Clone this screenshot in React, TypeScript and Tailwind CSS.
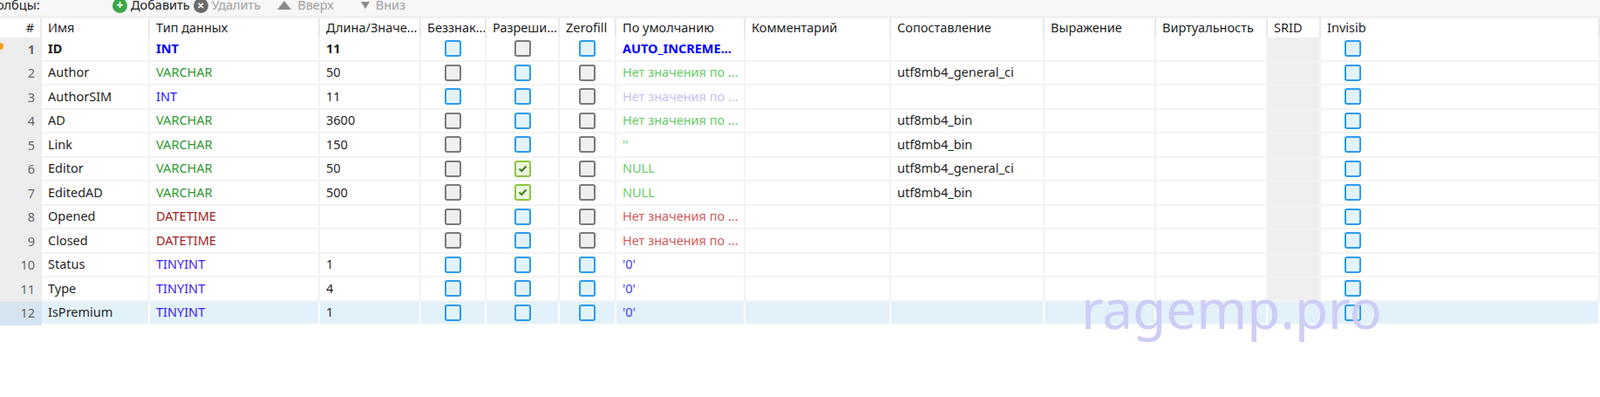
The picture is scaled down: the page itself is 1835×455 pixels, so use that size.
import React from "react";

type R = [string, string, string, string, string, string, string, string, string, string];
const rows: R[] = [
  ["ID","INT","11","b","g","b","AUTO_INCREME...","","text-[#0000ff] font-bold","text-[#0000ff] font-bold"],
  ["Author","VARCHAR","50","g","b","g","Нет значения по ...","utf8mb4_general_ci","text-[#2e9a2e]","text-[#6ccb6c]"],
  ["AuthorSIM","INT","11","b","b","g","Нет значения по ...","","text-[#1a1aff]","text-[#c3c3f0]"],
  ["AD","VARCHAR","3600","g","b","g","Нет значения по ...","utf8mb4_bin","text-[#2e9a2e]","text-[#6ccb6c]"],
  ["Link","VARCHAR","150","g","b","g","''","utf8mb4_bin","text-[#2e9a2e]","text-[#6ccb6c]"],
  ["Editor","VARCHAR","50","g","c","g","NULL","utf8mb4_general_ci","text-[#2e9a2e]","text-[#6ccb6c]"],
  ["EditedAD","VARCHAR","500","g","c","g","NULL","utf8mb4_bin","text-[#2e9a2e]","text-[#6ccb6c]"],
  ["Opened","DATETIME","","g","b","g","Нет значения по ...","","text-[#a11d1d]","text-[#d06060]"],
  ["Closed","DATETIME","","g","b","g","Нет значения по ...","","text-[#a11d1d]","text-[#d06060]"],
  ["Status","TINYINT","1","b","b","b","'0'","","text-[#3a1aff]","text-[#3a3aff]"],
  ["Type","TINYINT","4","b","b","b","'0'","","text-[#3a1aff]","text-[#3a3aff]"],
  ["IsPremium","TINYINT","1","b","b","b","'0'","","text-[#3a1aff]","text-[#3a3aff]"],
];

const W = ["w-[48px]","w-[124px]","w-[195px]","w-[116px]","w-[75px]","w-[84px]","w-[65px]","w-[148px]","w-[167px]","w-[176px]","w-[128px]","w-[128px]","w-[61px]","w-[320px]"];

function Box({ k }: { k: string }) {
  if (k === "b") return <div className="w-[19px] h-[19px] rounded-[3px] border-[2.5px] border-[#2b9bf0] bg-[#e3f3fd]" />;
  if (k === "g") return <div className="w-[19px] h-[19px] rounded-[3px] border-[2.5px] border-[#7a7a7a] bg-[#efefef]" />;
  return (
    <div className="w-[19px] h-[19px] rounded-[3px] border-[2.5px] border-[#8cc63f] bg-[#eef8e2] flex items-center justify-center">
      <svg width="11" height="9" viewBox="0 0 11 9"><path d="M1.5 4.5 L4.2 7 L9.5 1.5" stroke="#3c7a1e" strokeWidth="2" fill="none" /></svg>
    </div>
  );
}

export default function App() {
  const hdr = ["#","Имя","Тип данных","Длина/Значе...","Беззнак...","Разреши...","Zerofill","По умолчанию","Комментарий","Сопоставление","Выражение","Виртуальность","SRID","Invisib"];
  return (
    <div className="relative w-[1835px] h-[455px] bg-white overflow-hidden text-[14.5px] text-[#1f1f1f] font-['Noto_Sans','Open_Sans',sans-serif]">
      <div className="h-[24px] bg-[#f7f7f7] flex items-center -mt-[6px]">
        <span className="ml-[-4px] w-[133px]">олбцы:</span>
        <span className="flex items-center gap-[4px]"><span className="w-[17px] h-[17px] rounded-full bg-[#3aa64a] text-white flex items-center justify-center text-[14px] font-bold leading-none">+</span>Добавить</span>
        <span className="flex items-center gap-[4px] ml-[4px] text-[#a0a0a0]"><span className="w-[17px] h-[17px] rounded-full bg-[#6b6b6b] text-white flex items-center justify-center text-[10px] font-bold leading-none">✕</span>Удалить</span>
        <span className="flex items-center gap-[6px] ml-[18px] text-[#a0a0a0]"><svg width="18" height="12"><path d="M9 1 L17 11 L1 11Z" fill="#8a8a8a"/></svg>Вверх</span>
        <span className="flex items-center gap-[6px] ml-[30px] text-[#a0a0a0]"><svg width="12" height="10"><path d="M1 1 L11 1 L6 9Z" fill="#8a8a8a"/></svg>Вниз</span>
      </div>
      <div className="h-[3px] bg-[#f0f0f0]" />
      <div className="flex h-[22px]">
        {hdr.map((h, i) => (
          <div key={i} className={`${W[i]} shrink-0 border-r-2 border-[#e9e9e9] flex items-center px-[7px] ${i === 0 ? "justify-end" : ""} whitespace-nowrap overflow-hidden`}>{h}</div>
        ))}
      </div>
      {rows.map((r, i) => {
        const sel = i === 11;
        const cell = `shrink-0 flex items-center px-[7px] whitespace-nowrap overflow-hidden border-b-2 border-r-2 ${sel ? "bg-[#e3f1fb] border-white" : "border-[#f3f3f3]"}`;
        return (
          <div key={i} className="flex h-[27.5px]">
            <div className={`${W[0]} shrink-0 relative flex items-center justify-end pr-[8px] text-[#666] ${sel ? "bg-[#d5e4ef]" : "bg-[#ededed]"} ${i === 0 ? "font-bold text-[#111]" : ""}`}>
              {i === 0 && <span className="absolute left-[-4px] top-[6px] w-[8px] h-[8px] rounded-full bg-[#f4a020]" />}
              {i + 1}
            </div>
            <div className={`${W[1]} ${cell} ${i === 0 ? "font-bold" : ""}`}>{r[0]}</div>
            <div className={`${W[2]} ${cell} ${r[8]}`}>{r[1]}</div>
            <div className={`${W[3]} ${cell} ${i === 0 ? "font-bold" : ""}`}>{r[2]}</div>
            <div className={`${W[4]} ${cell} justify-center`}><Box k={r[3]} /></div>
            <div className={`${W[5]} ${cell} justify-center`}><Box k={r[4]} /></div>
            <div className={`${W[6]} ${cell} justify-center`}><Box k={r[5]} /></div>
            <div className={`${W[7]} ${cell} ${r[9]}`}>{r[6]}</div>
            <div className={`${W[8]} ${cell}`}></div>
            <div className={`${W[9]} ${cell}`}>{r[7]}</div>
            <div className={`${W[10]} ${cell}`}></div>
            <div className={`${W[11]} ${cell}`}></div>
            <div className={`${W[12]} ${cell} ${sel ? "" : "bg-[#efefef]"}`}></div>
            <div className={`${W[13]} ${cell} pl-[27px]`}><Box k="b" /></div>
          </div>
        );
      })}
      <span className="absolute left-[1240px] top-[322px] text-[62px] leading-none text-[#cdcdf6] pointer-events-none font-['Liberation_Sans',sans-serif]">ragemp.pro</span>
    </div>
  );
}
